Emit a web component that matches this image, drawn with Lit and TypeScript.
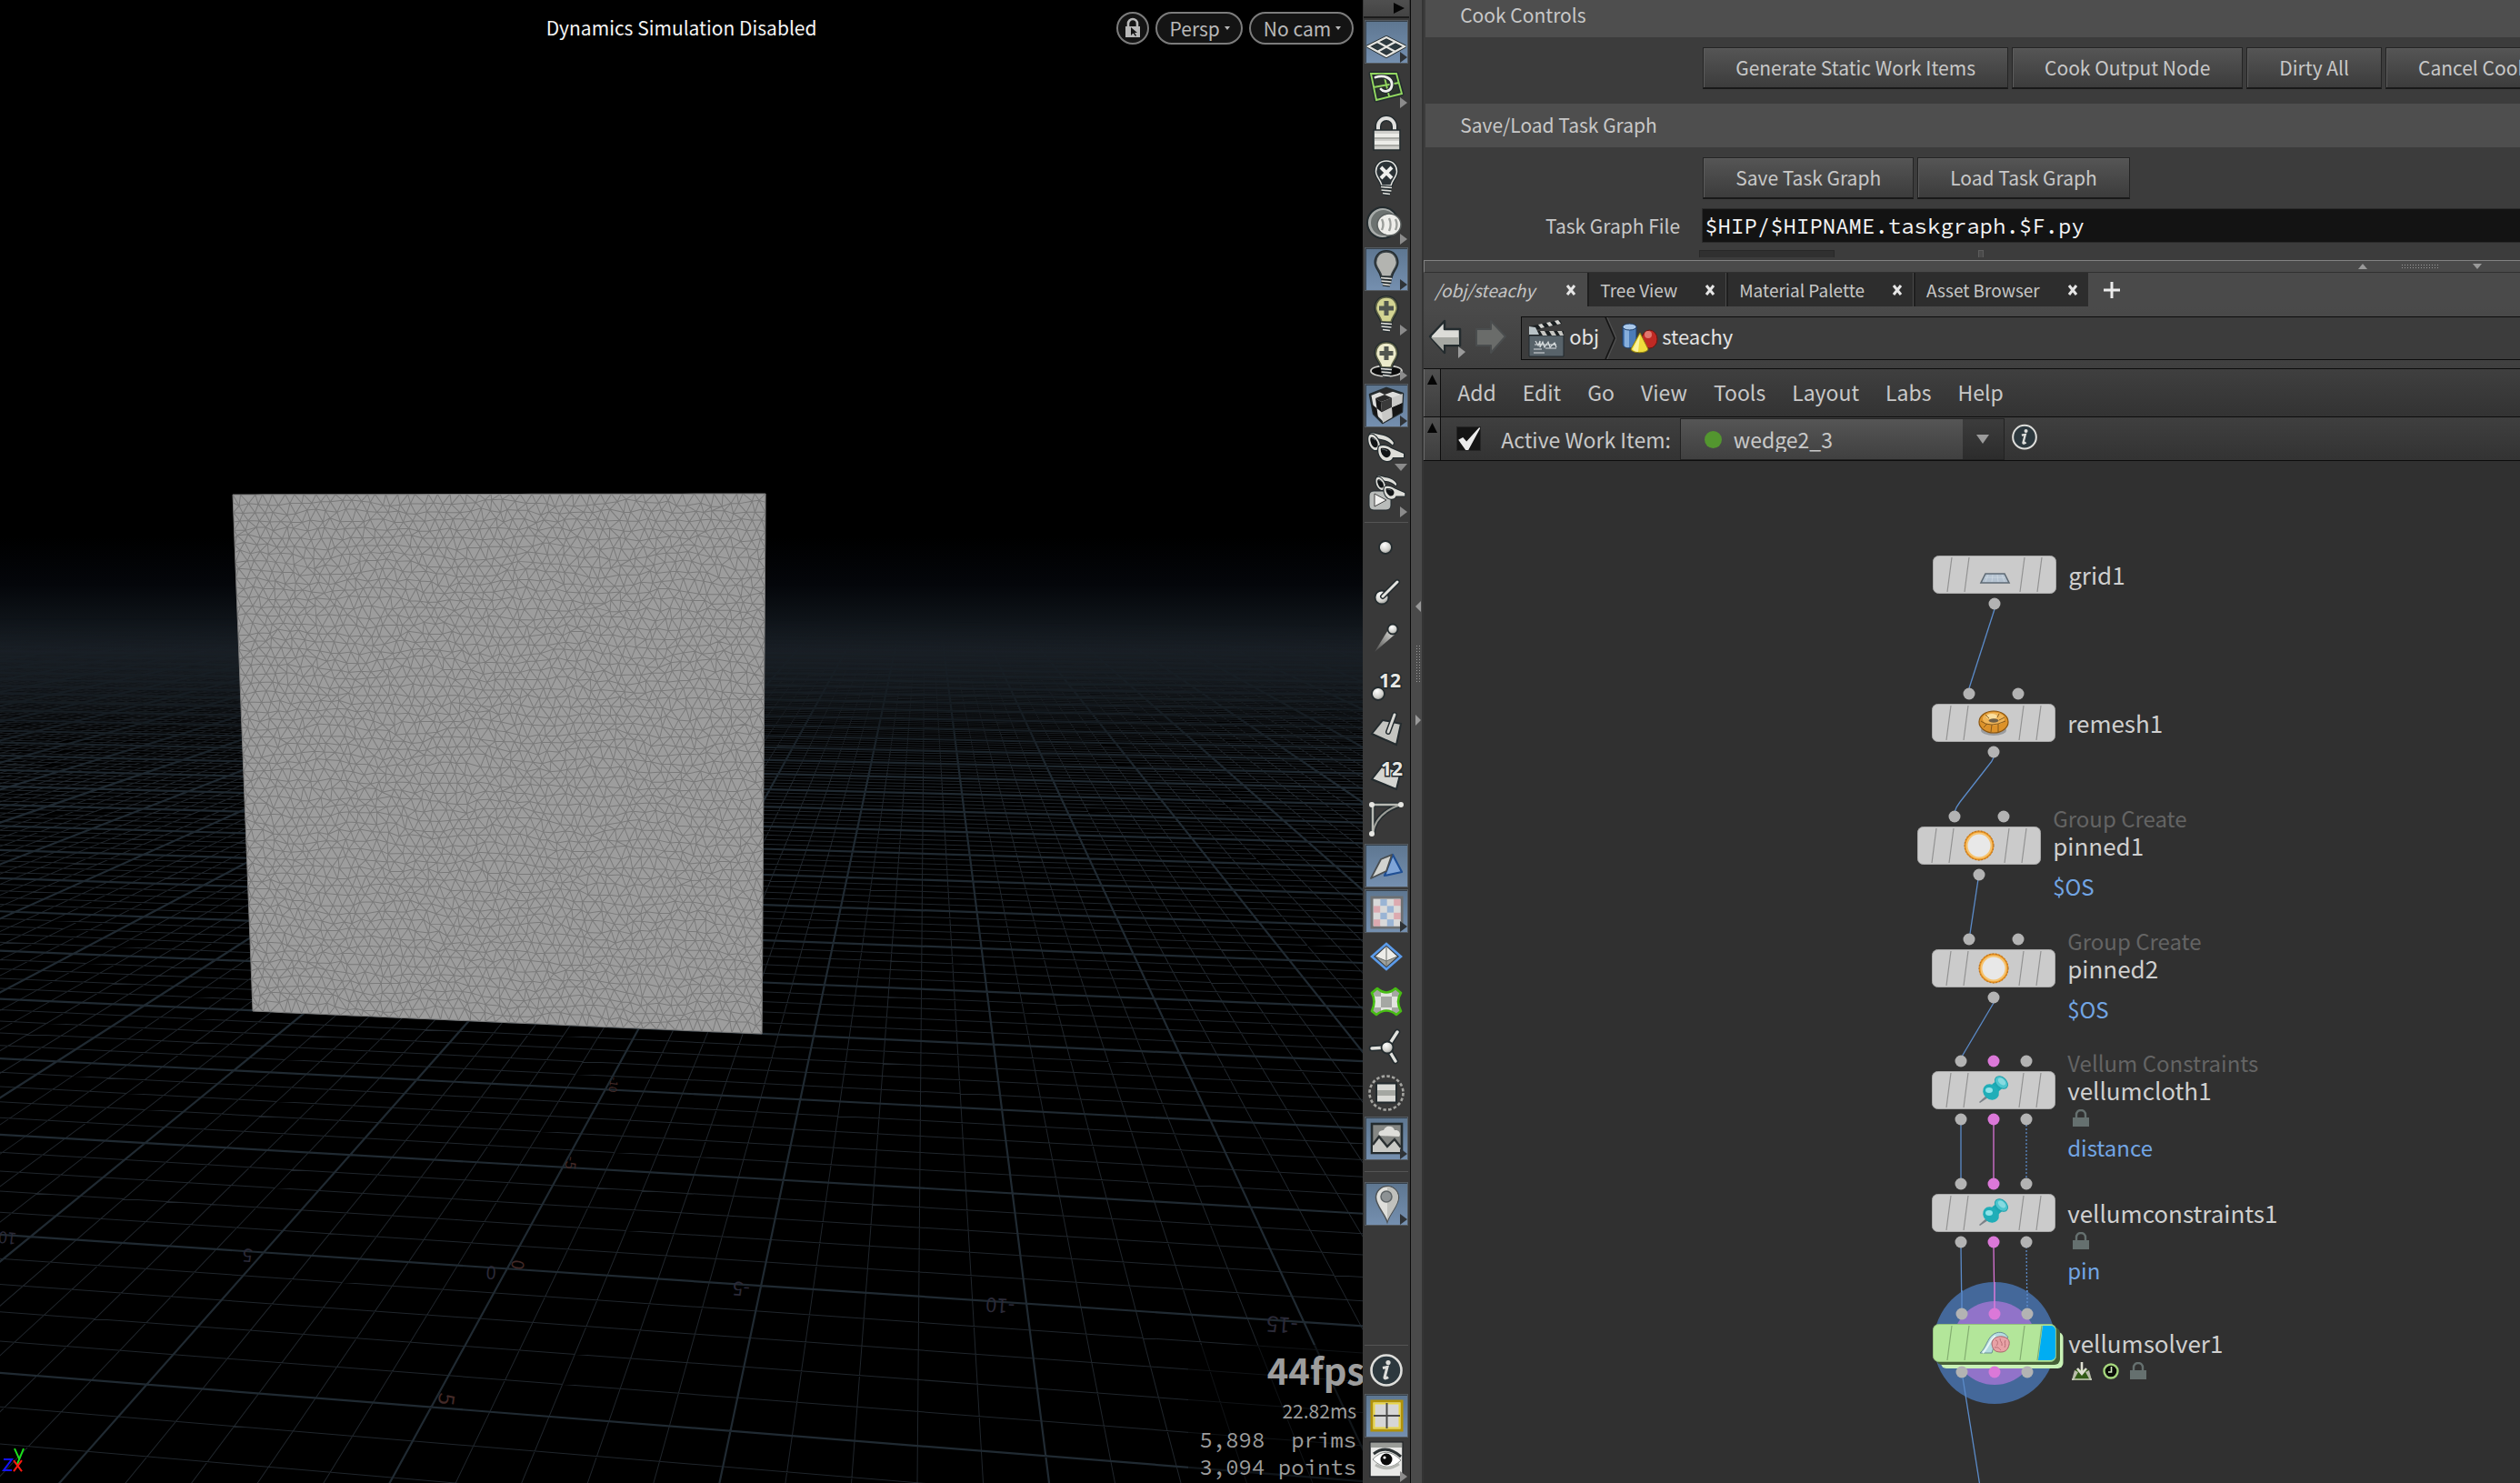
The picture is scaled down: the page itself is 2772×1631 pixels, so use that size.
import { LitElement, html, svg, css, nothing } from "lit";
import type { TemplateResult, SVGTemplateResult } from "lit";
import { customElement, property } from "lit/decorators.js";
import { classMap } from "lit/directives/class-map.js";
import { styleMap } from "lit/directives/style-map.js";

const base = css`
  *,
  *::before,
  *::after {
    box-sizing: border-box;
  }
  button,
  input,
  select {
    font: inherit;
    color: inherit;
    margin: 0;
  }
  svg {
    display: block;
  }
`;

/* ---------- 3D viewport ---------- */

type Pt = [number, number];

/* Ground plane (u, v) to screen. */
function project(u: number, v: number): Pt {
  const w = 0.00429 * u - 0.03069 * v + 1;
  return [(-52.28 * u - 31.24 * v + 557.7) / w, (2.32 * u - 17.06 * v + 1395.3) / w];
}

function gridPaths(): { minor: string; major: string } {
  let minor = "";
  let major = "";
  const add = (index: number, a: Pt, b: Pt) => {
    const seg = `M${a[0].toFixed(1)} ${a[1].toFixed(1)}L${b[0].toFixed(1)} ${b[1].toFixed(1)}`;
    if (index % 5 === 0) major += seg;
    else minor += seg;
  };
  for (let v = 12; v >= -180; v--) add(v, project(-80, v), project(125, v));
  for (let u = 120; u >= -75; u--) add(u, project(u, 12), project(u, -180));
  return { minor, major };
}

function clothPath(): string {
  const corners: Pt[] = [
    [256, 544],
    [842, 543],
    [838, 1137],
    [278, 1112],
  ];
  const cols = 52;
  const rows = 60;
  let seed = 7;
  const rnd = () => {
    seed = (seed * 16807) % 2147483647;
    return seed / 2147483647 - 0.5;
  };
  const at = (s: number, t: number): Pt => {
    const [a, b, c, d] = corners;
    return [0, 1].map(
      (k) => (1 - t) * ((1 - s) * a[k] + s * b[k]) + t * ((1 - s) * d[k] + s * c[k])
    ) as Pt;
  };
  const grid: Pt[][] = [];
  for (let r = 0; r <= rows; r++) {
    const row: Pt[] = [];
    const odd = r % 2 === 1;
    const n = odd ? cols + 2 : cols + 1;
    for (let i = 0; i < n; i++) {
      let s = odd ? Math.min(Math.max(i - 0.5, 0), cols) / cols : i / cols;
      let t = r / rows;
      const wave = 0.006 * Math.sin(s * 23 + t * 9) * Math.sin(t * 19 + 2);
      if (s > 0 && s < 1) s += (rnd() * 0.5) / cols;
      if (t > 0 && t < 1) t += (rnd() * 0.5) / rows + wave;
      row.push(at(s, t));
    }
    grid.push(row);
  }
  let d = "";
  const seg = (p: Pt, q: Pt) => {
    d += `M${p[0].toFixed(1)} ${p[1].toFixed(1)}L${q[0].toFixed(1)} ${q[1].toFixed(1)}`;
  };
  grid.forEach((row, r) => {
    for (let i = 1; i < row.length; i++) seg(row[i - 1], row[i]);
    for (const other of [grid[r - 1], grid[r + 1]]) {
      if (r % 2 === 1 || !other) continue;
      row.forEach((p, i) => {
        seg(p, other[i]);
        seg(p, other[i + 1]);
      });
    }
  });
  return d;
}

const GRID = gridPaths();
const CLOTH = clothPath();

interface AxisLabel {
  text: string;
  x: number;
  y: number;
  turn: number;
  size: number;
  kind: "u" | "v";
}

const AXIS_LABELS: AxisLabel[] = [
  { text: "10", x: 8, y: 1363, turn: 186, size: 18, kind: "u" },
  { text: "5", x: 272, y: 1382, turn: 184, size: 20, kind: "u" },
  { text: "0", x: 540, y: 1401, turn: 184, size: 20, kind: "u" },
  { text: "-5", x: 815, y: 1419, turn: 184, size: 21, kind: "u" },
  { text: "-10", x: 1100, y: 1438, turn: 184, size: 22, kind: "u" },
  { text: "-15", x: 1410, y: 1459, turn: 184, size: 24, kind: "u" },
  { text: "-10", x: 676, y: 1193, turn: 98, size: 12, kind: "v" },
  { text: "-5", x: 629, y: 1279, turn: 98, size: 16, kind: "v" },
  { text: "0", x: 571, y: 1391, turn: 98, size: 19, kind: "v" },
  { text: "5", x: 493, y: 1539, turn: 98, size: 24, kind: "v" },
];

@customElement("scene-view")
export class SceneView extends LitElement {
  static styles = [
    base,
    css`
      :host {
        display: grid;
        grid-template: minmax(0, 1fr) / minmax(0, 1fr);
        position: relative;
        overflow: hidden;
        background: #000;
      }
      .scene {
        width: 100%;
        height: 100%;
        grid-area: 1 / 1;
      }
      .overlay {
        grid-area: 1 / 1;
        position: relative;
        display: flex;
        flex-direction: column;
        justify-content: space-between;
      }
      .top {
        display: grid;
        grid-template-columns: 1fr auto 1fr;
        align-items: start;
        padding: 13px 10px 0;
      }
      .title {
        grid-column: 2;
        color: #f4f4f4;
        line-height: 34px;
        white-space: nowrap;
      }
      .pills {
        display: flex;
        justify-content: flex-end;
        gap: 7px;
      }
      .pill {
        display: flex;
        align-items: center;
        gap: 5px;
        height: 36px;
        padding: 0 12px 1px 14px;
        border: 2px solid #7c7c7c;
        border-radius: 18px;
        background: #141414;
        color: #b9b9b9;
        white-space: nowrap;
      }
      .pill.round {
        width: 36px;
        padding: 0;
        justify-content: center;
      }
      .stats {
        align-self: flex-end;
        text-align: right;
        color: #9d9d9d;
        padding: 0 7px 2px 12px;
        background: rgba(0, 0, 0, 0.5);
      }
      .fps {
        font-size: 40px;
        line-height: 54px;
        font-weight: 700;
        margin-right: -9px;
      }
      .ms {
        line-height: 36px;
      }
      .counts {
        font: 24px/30px "Source Code Pro", "Liberation Mono", monospace;
        white-space: pre;
      }
      .tag {
        font-family: "Noto Sans CJK SC", sans-serif;
        text-anchor: middle;
        dominant-baseline: central;
      }
      .u {
        fill: #2b2a38;
      }
      .v {
        fill: #432a28;
      }
    `,
  ];

  render() {
    return html`
      <svg class="scene" viewBox="0 0 1499 1631" preserveAspectRatio="xMidYMid slice" aria-hidden="true">
        <defs>
          <linearGradient id="fog" x1="0" y1="0" x2="0" y2="1">
            <stop offset="0" stop-color="#000" />
            <stop offset="0.25" stop-color="#04060a" />
            <stop offset="0.45" stop-color="#0f1419" />
            <stop offset="0.6" stop-color="#161b21" />
            <stop offset="0.75" stop-color="#0f1317" />
            <stop offset="1" stop-color="#000" />
          </linearGradient>
          <linearGradient id="fade" gradientUnits="userSpaceOnUse" x1="0" y1="680" x2="0" y2="860">
            <stop offset="0" stop-color="#000" />
            <stop offset="0.35" stop-color="#777" />
            <stop offset="1" stop-color="#fff" />
          </linearGradient>
          <mask id="far" maskUnits="userSpaceOnUse" x="0" y="600" width="1499" height="1031">
            <rect y="600" width="1499" height="1031" fill="url(#fade)" />
          </mask>
        </defs>
        <rect y="590" width="1499" height="210" fill="url(#fog)" />
        <g mask="url(#far)" fill="none">
          <path d=${GRID.minor} stroke="#20262c" stroke-width="1" />
          <path d=${GRID.major} stroke="#202a32" stroke-width="2.2" />
        </g>
        ${AXIS_LABELS.map(
          (l) => svg`<text class="tag ${l.kind}" font-size=${l.size}
            transform="translate(${l.x} ${l.y}) rotate(${l.turn})">${l.text}</text>`
        )}
        <path d="M256 544L842 543L838 1137L278 1112Z" fill="#9d9d9d" />
        <path d=${CLOTH} stroke="#7a7a7a" stroke-width="1" fill="none" />
        <g fill="none" stroke-width="2">
          <path d="M16 1593l5 11M26 1593l-7 17" stroke="#1be01b" />
          <path d="M4 1605h9l-9 12h9" stroke="#1414ff" />
          <path d="M15 1606l9 12M24 1606l-9 12" stroke="#ff1a10" />
        </g>
      </svg>
      <div class="overlay">
        <div class="top">
          <div class="title">Dynamics Simulation Disabled</div>
          <div class="pills">
            <button class="pill round" aria-label="Lock camera">
              <svg width="18" height="24" viewBox="0 0 18 24">
                <path d="M4 11V7a5 5 0 0 1 10 0v4" fill="none" stroke="#b9b9b9" stroke-width="2.6" />
                <path d="M1 10h16v12H1z" fill="#b9b9b9" />
                <path d="M7 11v9l2.500-2.500L12 21l1-1-2-3h3z" fill="#141414" />
              </svg>
            </button>
            <button class="pill">Persp${this.caret()}</button>
            <button class="pill">No cam${this.caret()}</button>
          </div>
        </div>
        <div class="stats">
          <div class="fps">44fps</div>
          <div class="ms">22.82ms</div>
          <div class="counts">5,898  prims</div>
          <div class="counts">3,094 points</div>
        </div>
      </div>
    `;
  }

  private caret() {
    return html`<svg width="6" height="4" viewBox="0 0 6 4"><path d="M0 0h6L3 4z" fill="#b9b9b9" /></svg>`;
  }
}

/* ---------- display options rail ---------- */

interface Tool {
  id: string;
  label: string;
  icon: SVGTemplateResult;
  active?: boolean;
  menu?: "side" | "down";
}

const DARK = "#232b2e";

const bulb = (fill: string, ring: string) => svg`
  <path d="M24 5C16.500 5 12.500 10.500 12.500 16.500c0 6 5 9 6.500 15.500h10c1.500-6.500 6.500-9.500 6.500-15.500C35.500 10.500 31.500 5 24 5z"
    fill=${fill} stroke=${DARK} stroke-width="4" />
  <path d="M24 5C16.500 5 12.500 10.500 12.500 16.500c0 6 5 9 6.500 15.500h10c1.500-6.500 6.500-9.500 6.500-15.500C35.500 10.500 31.500 5 24 5z"
    fill=${fill} stroke=${ring} stroke-width="1.500" />
  <path d="M18 33.500l12 1M18.500 37l11 1M20 40.500l8 1" stroke=${DARK} stroke-width="4" />
  <path d="M18 33.500l12 1M18.500 37l11 1M20 40.500l8 1" stroke="#dcdcd8" stroke-width="1.600" />`;

const glasses = svg`
  <g fill="#deded9" stroke=${DARK} stroke-width="2.500" stroke-linejoin="round" paint-order="stroke">
    <path d="M6 5C8 3 12 5 16 6c8 1 13 4 16 9l-1 2.500C27 13 22 11 12 10z" />
    <path d="M5 7c3-3 7 0 10 5 2 4 3 7 0 10-4 3-8-1-10-6-1-4-1-7 0-9z" />
    <path d="M16 19c4-2 9-1 13 2l14 6v4H31c-1 4-6 5-10 3-5-3-7-10-5-15z" />
  </g>
  <path d="M7 9c2-1 5 1 7 5 1 3 1 5-1 6-3 1-5-2-6-5s-1-5 0-6z" fill="#111416" />
  <path d="M18 21c3-1 8 0 10 3 2 4-1 8-5 7-4-2-6-7-5-10z" fill="#111416" />
  <path d="M8 10c2 0 3 1 4 2M19 22c2 0 4 0 6 2" fill="none" stroke="#5b6265" stroke-width="1.200" />`;

const ball = (x: number, y: number, r: number) =>
  svg`<circle cx=${x} cy=${y} r=${r} fill="url(#ball)" stroke=${DARK} stroke-width="1.800" />`;

const cube = svg`
  <path d="M6 12L24 5l18 6-1 20-21 12L10 33z" fill="#dededc" stroke=${DARK} stroke-width="2.500" stroke-linejoin="round" />
  <path d="M15 8.500L24 5l9 3-11 4z" fill="#2a2a2a" />
  <path d="M12 16l10-4 8 3.500L18 20z" fill="#2a2a2a" />
  <path d="M12 16l6 4 1 11.500-5.500-4.500zM8 22.500l5.500 4.500L15 38l-5-5z" fill="#161616" />
  <path d="M18 20l12-4.500V26l-11 5.500z" fill="#3a3a3a" />
  <path d="M30 26l11.500-5L41 31l-10.500 6z" fill="#161616" />
  <path d="M30 15.500L42 11l-.500 10L30 26zM19 31.500L30 26l.500 11L20 43z" fill="#c9c9c7" />`;

const CHECK = ["#9ab4d4", "#d9d9d9", "#dcaab0", "#d9d9d9"];

const TOP_TOOLS: Tool[] = [
  {
    id: "plane",
    label: "Reference plane",
    active: true,
    menu: "side",
    icon: svg`<path d="M24 19L44 29 24 40 4 29z" fill="#2d3a40" stroke=${DARK} stroke-width="4" stroke-linejoin="round" />
      <path d="M24 19L44 29 24 40 4 29zM14 24l20 11M34 24L14 35" fill="none" stroke="#e6e6e2" stroke-width="2.200" />`,
  },
  {
    id: "construction",
    label: "Construction plane",
    menu: "side",
    icon: svg`<path d="M7 9h28l6 22-28 7z" fill="#2c352c" stroke=${DARK} stroke-width="5" stroke-linejoin="round" />
      <path d="M7 9h28l6 22-28 7zM21 9l6 25M10 24l28-5" fill="none" stroke="#93d860" stroke-width="1.900" />
      <path d="M12 13c10-3 19 1 18 9-1 7-9 8-12 4" fill="none" stroke=${DARK} stroke-width="5" />
      <path d="M12 13c10-3 19 1 18 9-1 7-9 8-12 4" fill="none" stroke="#f0f0ee" stroke-width="2.800" stroke-linecap="round" />`,
  },
  {
    id: "lock",
    label: "Lock",
    icon: svg`<path d="M15 24v-7a9 9 0 0 1 18 0v7" fill="none" stroke=${DARK} stroke-width="7" />
      <path d="M15 24v-7a9 9 0 0 1 18 0v7" fill="none" stroke="#e0e0de" stroke-width="4" />
      <path d="M10 21h29v22H10z" fill="#cfcfcb" stroke=${DARK} stroke-width="1.500" />
      <path d="M11 25h27v4H11zM11 33h27v4H11z" fill="#ecece8" /><path d="M11 29h27v2H11zM11 37h27v2H11z" fill="#a9aaa5" />`,
  },
  {
    id: "nolight",
    label: "No lighting",
    icon: svg`${bulb("#2b3236", "#e4e4e0")}<path d="M18 12l12 12M30 12L18 24" stroke="#f0f0ee" stroke-width="4" />`,
  },
  {
    id: "headlight",
    label: "Headlight",
    menu: "side",
    icon: svg`<circle cx="20" cy="23" r="17" fill="#a9adab" stroke=${DARK} stroke-width="2" />
      <circle cx="21" cy="23" r="14" fill="#6c7270" /><ellipse cx="27" cy="25" rx="13" ry="12" fill="#eeeeea" stroke="#5a5f5e" stroke-width="1.500" />
      <path d="M19 19c2 4 2 8 0 12M27 18c2 4 2 10 0 14M34 19c2 4 2 8 0 12" fill="none" stroke="#9b9e9a" stroke-width="2.400" />`,
  },
  { id: "normal", label: "Normal lighting", active: true, menu: "side", icon: bulb("#b3b4b0", "#3a4246") },
  {
    id: "addlight",
    label: "High quality lighting",
    menu: "side",
    icon: svg`${bulb("#d3d492", "#5e6146")}<path d="M24 9v16M16 17h16" stroke="#51564f" stroke-width="5" />`,
  },
  {
    id: "shadows",
    label: "High quality lighting and shadows",
    menu: "side",
    icon: svg`<ellipse cx="24" cy="36" rx="17" ry="6" fill="#0c0c0c" stroke="#cfcfcb" stroke-width="1.800" />
      ${bulb("#ecebcb", "#5e6146")}<path d="M24 9v15M16.500 16.500h15" stroke="#51564f" stroke-width="5" />`,
  },
  { id: "materials", label: "Materials", active: true, menu: "side", icon: cube },
  { id: "ghost", label: "Ghost other objects", menu: "down", icon: glasses },
  {
    id: "display",
    label: "Display options for other objects",
    menu: "side",
    icon: svg`<rect x="5" y="18" width="24" height="21" rx="5" fill="#b9bcba" stroke=${DARK} />
      <path d="M11 21l13 7-13 7z" fill="#f2f2f0" stroke="#444" />
      <g transform="translate(9 -2) scale(.82)">${glasses}</g>`,
  },
];

const MID_TOOLS: Tool[] = [
  { id: "points", label: "Display points", icon: ball(23, 24, 7) },
  {
    id: "normals",
    label: "Point normals",
    icon: svg`${ball(19, 29, 7.5)}<path d="M20 28L36 12" stroke=${DARK} stroke-width="6" stroke-linecap="round" />
      <path d="M20 28L36 12" stroke="#e4e4e0" stroke-width="3" stroke-linecap="round" />`,
  },
  {
    id: "trails",
    label: "Point trails",
    icon: svg`<path d="M11 39L27 13l6 7z" fill="url(#tail)" />${ball(31, 14, 5.5)}`,
  },
  {
    id: "pointnum",
    label: "Point numbers",
    icon: svg`${ball(15, 35, 7)}<text class="num" x="16" y="28">12</text>`,
  },
  {
    id: "primnormals",
    label: "Primitive normals",
    icon: svg`<path d="M8 29L20 14l20 4-5 23z" fill="#c4c5c1" stroke=${DARK} stroke-width="2" />
      <path d="M26 27l7-19" stroke=${DARK} stroke-width="6" stroke-linecap="round" />
      <path d="M26 27l7-19" stroke="#d8d8d4" stroke-width="3" stroke-linecap="round" />`,
  },
  {
    id: "primnum",
    label: "Primitive numbers",
    icon: svg`<path d="M8 29L19 15l21 5-5 20z" fill="#d4d5d1" stroke=${DARK} stroke-width="2" />
      <text class="num" x="18" y="25">12</text>`,
  },
  {
    id: "hulls",
    label: "Hulls",
    icon: svg`<path d="M9 39V7h31M9 39Q12 16 40 7" fill="none" stroke=${DARK} stroke-width="5" />
      <path d="M9 39Q12 16 40 7" fill="none" stroke="#9b9d97" stroke-width="2" />
      <path d="M9 39V7h31" fill="none" stroke="#b8bab4" stroke-width="2.500" />
      <g fill="#e6e6e2"><circle cx="8" cy="7" r="3" /><circle cx="40" cy="7" r="3" /><circle cx="8" cy="39" r="3" /></g>`,
  },
  {
    id: "backface",
    label: "Back faces",
    active: true,
    icon: svg`<path d="M31 12l10 19-19 4z" fill="#7fa5d8" stroke="#1f4f94" stroke-width="2.200" stroke-linejoin="round" />
      <path d="M30 12L18 17 7 38l17-8z" fill="#d2d3cf" stroke="#4a4f52" stroke-width="1.800" stroke-linejoin="round" />`,
  },
  {
    id: "texture",
    label: "UV texture",
    active: true,
    menu: "side",
    icon: svg`<rect x="8" y="9" width="33" height="33" fill="#d9d9d9" stroke="#6d7072" stroke-width="3" />
      ${[0, 1, 2, 3].flatMap((r) =>
        [0, 1, 2, 3].map((c) => {
          const k = (r + c) % 2 === 0 ? 1 : (c + 2 * r) % 4 < 2 ? 0 : 2;
          return svg`<rect x=${10 + c * 7.4} y=${11 + r * 7.4} width="7.400" height="7.400" fill=${CHECK[k]} />`;
        })
      )}`,
  },
  {
    id: "hullshade",
    label: "Subdivision",
    icon: svg`<path d="M24 10L40 24 24 38 8 24z" fill="#3a3d3f" stroke="#5b9bea" stroke-width="2.600" />
      <path d="M24 13l12 11-12 5-12-5z" fill="#ecece8" /><path d="M24 29l12-5-12 11-12-11z" fill="#9fa19c" />
      <path d="M24 13v22M12 24l12 5 12-5" fill="none" stroke="#6d706c" stroke-width="1" />`,
  },
  {
    id: "patch",
    label: "Group overlay",
    icon: svg`<path d="M8 14l6-5q10 9 20 0l6 5q-6 9 0 20l-5 4q-11-9-22 0l-5-4q5-11 0-20z" fill="#e2e3df" />
      <path d="M18 18h12v12H18zM9 14l5-5 4 3v6h-6zM30 12l4-3 6 5-3 4h-7zM11 30h7v4l-5 4-5-4zM30 30h7l3 4-5 4-5-4z" fill="#a5a7a3" />
      <path d="M8 14l6-5q10 9 20 0l6 5q-6 9 0 20l-5 4q-11-9-22 0l-5-4q5-11 0-20z" fill="none" stroke="#48bd14" stroke-width="2.600" stroke-linejoin="round" />`,
  },
  {
    id: "axes",
    label: "Origin gnomon",
    icon: svg`<path d="M25 24L8 25M25 24L36 7M25 24l9 15" stroke=${DARK} stroke-width="6.500" stroke-linecap="round" />
      <path d="M25 24L8 25M25 24L36 7M25 24l9 15" stroke="#e2e2de" stroke-width="3.400" stroke-linecap="round" />${ball(25, 24, 6.5)}`,
  },
  {
    id: "mask",
    label: "Isolate",
    icon: svg`<circle cx="24" cy="24" r="18.500" fill="none" stroke="#a4a4a0" stroke-width="2.600" stroke-dasharray="3.500 2.300" />
      <rect x="13" y="13.500" width="22" height="21" fill="#dadad6" stroke=${DARK} stroke-width="2" /><path d="M14 21h20v6H14z" fill="#a5a7a2" />`,
  },
  {
    id: "background",
    label: "Background image",
    active: true,
    menu: "side",
    icon: svg`<rect x="8" y="8" width="33" height="32" fill="#858784" stroke=${DARK} stroke-width="2.600" />
      <path d="M16 21c-2-5 3-6 5-6 2-6 11-5 12 0 6-1 7 5 5 7z" fill="#dededa" />
      <path d="M9 31l7-10 9 12 8-8 7 10v4H9z" fill="#c9cac6" /><path d="M9 31l7-9 9 11 8-8 7 9" fill="none" stroke="#2a3032" stroke-width="2.400" />`,
  },
];

const PIN: Tool = {
  id: "pin",
  label: "Visualizers",
  active: true,
  menu: "side",
  icon: svg`<path d="M25 44C22 34 12.500 26 12.500 17a12.500 12.500 0 0 1 25 0c0 9-9.500 17-12.500 27z" fill="#dfdfdb" stroke="#4e5356" stroke-width="1.500" />
    <path d="M25 43V5a12 12 0 0 1 12 12c0 9-9 17-12 26z" fill="#c0c1bd" />
    <circle cx="24" cy="16" r="6" fill="#8d9294" stroke="#5f6567" stroke-width="1.500" />`,
};

const infoIcon = svg`<circle cx="24" cy="24" r="16.500" fill="#2c383e" stroke="#dededb" stroke-width="2.600" />
  <circle cx="26" cy="15.500" r="2.600" fill="#dededb" />
  <path d="M20 21.500l5-1-3 11.500c0 1.500 2 1 4-.500" fill="none" stroke="#dededb" stroke-width="3" />`;

const BOTTOM_TOOLS: Tool[] = [
  { id: "info", label: "Information", icon: infoIcon },
  {
    id: "layout",
    label: "Viewport layout",
    active: true,
    icon: svg`<rect x="8" y="8" width="33" height="32" fill="#d6d6d6" stroke="#b19208" stroke-width="3" />
      <rect x="10.500" y="10.500" width="28" height="27" fill="none" stroke="#e8d548" stroke-width="2" />
      <path d="M24.500 10v28M10 24h29" stroke="#4a4a4a" stroke-width="2" />`,
  },
  {
    id: "options",
    label: "Display options",
    menu: "side",
    icon: svg`<rect x="6" y="3" width="36" height="38" fill="#e9e9e7" stroke="#26292b" stroke-width="1.500" /><path d="M7 4h34v5H7z" fill="#9a9c98" />
      <path d="M9 22q15-16 31 1-15 15-31-1z" fill="#fff" stroke="#8c908d" stroke-width="1" />
      <path d="M10 16q14-11 30 3" fill="none" stroke="#2c3234" stroke-width="3" />
      <circle cx="24" cy="22" r="6.500" fill="#0a0a0a" /><circle cx="22" cy="20" r="1.600" fill="#fff" />
      <path d="M12 28q13 8 26-1" fill="none" stroke="#b4b6b2" stroke-width="3" />`,
  },
];

@customElement("tool-rail")
export class ToolRail extends LitElement {
  static styles = [
    base,
    css`
      :host {
        display: flex;
        flex-direction: column;
        gap: 2px;
        padding: 0 1px;
        background: #393939;
        border-right: 1px solid #0a0a0a;
        overflow: hidden;
        align-items: center;
      }
      .defs {
        position: absolute;
      }
      .head {
        align-self: stretch;
        display: flex;
        justify-content: flex-end;
        align-items: center;
        height: 20px;
        padding: 0 5px 0 0;
        border: 0;
        border-bottom: 2px solid #1c1c1c;
        background: linear-gradient(#4f4f4f, #444);
      }
      .tool {
        width: 48px;
        height: 48px;
        flex: none;
        padding: 0;
        border: 0;
        background: none;
      }
      .tool svg {
        width: 48px;
        height: 48px;
      }
      .active {
        background: linear-gradient(#5d7690, #7590b0);
        box-shadow: inset 0 0 0 1px #555b61, inset 2px 2px 0 0 #35404b;
      }
      .rule {
        width: 48px;
        flex: none;
        height: 4px;
        display: flex;
        align-items: center;
      }
      .rule::before {
        content: "";
        flex: 1;
        height: 1px;
        background: #545454;
      }
      .rule.tall {
        height: 20px;
      }
      .end {
        margin-top: auto;
      }
      .num {
        font: 700 21px "Noto Sans", sans-serif;
        fill: #e8e8e4;
        stroke: #232b2e;
        stroke-width: 3;
        paint-order: stroke;
      }
    `,
  ];

  private tool(t: Tool) {
    const fill = t.active ? "#2f3337" : "#8b8b8b";
    return html`<button class=${classMap({ tool: true, active: !!t.active })} aria-label=${t.label}>
      <svg viewBox="0 0 48 48">
        ${t.icon}
        ${t.menu === "side" ? svg`<path d="M39 35l8 6-8 6z" fill=${fill} />` : nothing}
        ${t.menu === "down" ? svg`<path d="M33 38h14l-7 8z" fill=${fill} />` : nothing}
      </svg>
    </button>`;
  }

  render() {
    return html`
      <svg class="defs" width="0" height="0" aria-hidden="true">
        <defs>
          <radialGradient id="ball" cx="0.4" cy="0.3" r="0.8">
            <stop offset="0" stop-color="#fff" />
            <stop offset="0.6" stop-color="#cfcfcb" />
            <stop offset="1" stop-color="#7d7f7b" />
          </radialGradient>
          <linearGradient id="tail" x1="1" y1="0" x2="0" y2="1">
            <stop offset="0.2" stop-color="#c8c8c4" />
            <stop offset="1" stop-color="#c8c8c4" stop-opacity="0.1" />
          </linearGradient>
        </defs>
      </svg>
      <button class="head" aria-label="Expand">
        <svg width="12" height="12" viewBox="0 0 12 12"><path d="M0 0l12 6-12 6z" fill="#050505" /></svg>
      </button>
      ${TOP_TOOLS.map((t) => this.tool(t))}
      <div class="rule"></div>
      ${MID_TOOLS.map((t) => this.tool(t))}
      <div class="rule tall"></div>
      ${this.tool(PIN)}
      <div class="rule end"></div>
      ${BOTTOM_TOOLS.map((t) => this.tool(t))}
    `;
  }
}

/* ---------- parameter pane ---------- */

@customElement("param-pane")
export class ParamPane extends LitElement {
  static styles = [
    base,
    css`
      :host {
        display: block;
        padding-left: 2px;
        background: #3c3c3c;
        overflow: hidden;
      }
      .band {
        margin: 0;
        padding-left: 38px;
        height: 48px;
        font-size: inherit;
        font-weight: 400;
        line-height: 46px;
        background: #4e4e4e;
      }
      .band.cut {
        height: 41px;
        line-height: 32px;
      }
      .buttons {
        display: flex;
        gap: 4px;
        padding: 11px 0 16px 305px;
      }
      .buttons.tight {
        padding-bottom: 10px;
      }
      .btn {
        flex: none;
        height: 46px;
        padding: 0 35px 1px;
        border: 1px solid #242424;
        border-bottom: 2px solid #191919;
        background: linear-gradient(#555, #3c3c3c);
        box-shadow: inset 1px 1px 0 #5c5c5c;
        white-space: nowrap;
      }
      .field {
        display: grid;
        grid-template-columns: 280px minmax(0, 1fr);
        column-gap: 24px;
        align-items: center;
      }
      .field label {
        text-align: right;
      }
      .path {
        width: 100%;
        height: 38px;
        padding: 0 2px;
        border: 1px solid #2b2b2b;
        border-right: 0;
        border-radius: 0;
        background: #131313;
        color: #f4f4f4;
        font: 24px "Source Code Pro", "Liberation Mono", monospace;
      }
      .next {
        display: flex;
        gap: 158px;
        height: 19px;
        padding: 8px 0 3px 301px;
      }
      .slot {
        width: 149px;
        background: #303030;
        border: 1px solid #282828;
        border-bottom: 0;
      }
      .knob {
        width: 6px;
        background: #4a4a4a;
        border: 1px solid #5c5c5c;
        border-bottom: 0;
      }
    `,
  ];

  render() {
    return html`
      <h2 class="band cut">Cook Controls</h2>
      <div class="buttons">
        ${["Generate Static Work Items", "Cook Output Node", "Dirty All", "Cancel Cook"].map(
          (t) => html`<button class="btn">${t}</button>`
        )}
      </div>
      <h2 class="band">Save/Load Task Graph</h2>
      <div class="buttons tight">
        ${["Save Task Graph", "Load Task Graph"].map((t) => html`<button class="btn">${t}</button>`)}
      </div>
      <div class="field">
        <label for="graph-file">Task Graph File</label>
        <input class="path" id="graph-file" type="text" spellcheck="false" value="$HIP/$HIPNAME.taskgraph.$F.py" />
      </div>
      <div class="next"><span class="slot"></span><span class="knob"></span></div>
    `;
  }
}

/* ---------- network graph ---------- */

type IconName = "grid" | "donut" | "ring" | "tack" | "brain";

interface GraphNode {
  id: string;
  x: number;
  y: number;
  icon: IconName;
  type?: string;
  note?: string;
  locked?: boolean;
  solver?: boolean;
  ins: number;
}

/* Node positions on the network canvas, upper left corner. */
const NODES: GraphNode[] = [
  { id: "grid1", x: 560, y: 104, icon: "grid", ins: 0 },
  { id: "remesh1", x: 559, y: 267, icon: "donut", ins: 2 },
  { id: "pinned1", x: 543, y: 402, icon: "ring", type: "Group Create", note: "$OS", ins: 2 },
  { id: "pinned2", x: 559, y: 537, icon: "ring", type: "Group Create", note: "$OS", ins: 2 },
  { id: "vellumcloth1", x: 559, y: 671, icon: "tack", type: "Vellum Constraints", note: "distance", locked: true, ins: 3 },
  { id: "vellumconstraints1", x: 559, y: 806, icon: "tack", note: "pin", locked: true, ins: 3 },
  { id: "vellumsolver1", x: 560, y: 949, icon: "brain", solver: true, ins: 3 },
];

const ICONS: Record<IconName, SVGTemplateResult> = {
  grid: svg`<path d="M7 16h21l5 10H2z" fill="#b4c2d0" stroke="#5f6b75" stroke-width="1.600" />
    <path d="M10 17l-3 8M15 17l-1 8M20 17l1 8M25 17l3 8M6 20h23" stroke="#d3dde6" stroke-width=".6" />`,
  donut: svg`<ellipse cx="17" cy="25" rx="14" ry="6" fill="#84878c" opacity=".7" />
    <ellipse cx="17" cy="16" rx="16" ry="12" fill="#dc922a" stroke="#8a5510" stroke-width="1.200" />
    <ellipse cx="17" cy="12.500" rx="12" ry="7" fill="#efb65a" />
    <ellipse cx="15" cy="10" rx="6" ry="3" fill="#fadf9f" />
    <ellipse cx="17" cy="14.500" rx="5.500" ry="2.200" fill="#6f6048" />
    <path d="M3 15l5 3 7 1 7-1 8-3M8 8l4 4M23 7l-2 4M29 11l-6 3M6 22l4-4M14 27l1-8M22 27l0-9" fill="none" stroke="#7c5218" stroke-width=".9" />`,
  ring: svg`<circle cx="17" cy="17" r="14" fill="#e8e8e8" stroke="#f6c470" stroke-width="3" />
    <circle cx="17" cy="17" r="15.500" fill="none" stroke="#e8901c" stroke-width="1.800" />
    <circle cx="17" cy="17" r="16" fill="none" stroke="#9a6a3a" stroke-width="1" stroke-dasharray="1.500 2" />`,
  tack: svg`<path d="M11 21L1 30l1 1 12-8z" fill="#7c8288" />
    <path d="M17 9l5-3 7 7-5 4-3 3-7-8z" fill="#1aa9b4" />
    <ellipse cx="14" cy="19" rx="9.500" ry="8" transform="rotate(42 14 19)" fill="#20aeb8" />
    <ellipse cx="12" cy="17" rx="4" ry="3" fill="#8fe4ea" />
    <ellipse cx="25.500" cy="8.500" rx="8" ry="5.500" transform="rotate(42 25.500 8.500)" fill="#4cc6cf" stroke="#1fa0ab" />
    <ellipse cx="26" cy="7.500" rx="5" ry="3" transform="rotate(42 26 7.500)" fill="#86dae0" />`,
  brain: svg`<path d="M1 28C8 22 9 12 15 8c5-4 13-4 17 3l-6 2c-8 0-9 5-12 15z" fill="#b4dce0" stroke="#6b8f96" stroke-width="1" />
    <path d="M4 28C10 22 12 13 18 9" fill="none" stroke="#e6f6f6" stroke-width="2" />
    <path d="M14 18c0-6 6-9 12-8s8 5 7 9-3 8-9 8-9-2-10-9z" fill="#e8a2a6" stroke="#a8666c" stroke-width="1" />
    <path d="M18 14c3 0 3 4 1 6M23 12c0 4 3 4 2 8M29 14c-2 3 1 4-1 8M17 22c4-1 5 1 7 3" fill="none" stroke="#b86e76" stroke-width="1" />`,
};

const lock = html`<svg width="18" height="20" viewBox="0 0 18 20" aria-hidden="true">
  <path d="M4 10V6a5 5 0 0 1 10 0v4" fill="none" stroke="#65706f" stroke-width="2.400" />
  <path d="M0 9h18v10H0z" fill="#65706f" />
</svg>`;

@customElement("network-graph")
export class NetworkGraph extends LitElement {
  static styles = [
    base,
    css`
      :host {
        display: block;
        position: relative;
        overflow: hidden;
        background: #303030;
      }
      .wires {
        position: absolute;
        left: 0;
        top: 0;
        width: 100%;
        height: 100%;
      }
      .node {
        position: absolute;
        display: flex;
        align-items: center;
        gap: 13px;
        height: 42px;
      }
      .body {
        overflow: visible;
        flex: none;
      }
      .text {
        position: relative;
        white-space: nowrap;
      }
      .name {
        font-size: 26px;
        line-height: 32px;
        color: #cfcfcf;
      }
      .type,
      .below {
        position: absolute;
        left: 0;
      }
      .type {
        bottom: 32px;
        font-size: 24px;
        line-height: 28px;
        color: #646464;
      }
      .below {
        top: 32px;
        display: flex;
        flex-direction: column;
        font-size: 24px;
        line-height: 34px;
        color: #72a5e4;
      }
      .below.plain {
        top: 44px;
      }
      .flags {
        display: flex;
        align-items: center;
        gap: 12px;
        height: 30px;
        padding-left: 6px;
      }
      .flags.up {
        padding-left: 4px;
      }
    `,
  ];

  private ports(y: number, count: number) {
    const xs = count === 1 ? [68] : count === 2 ? [41, 95] : [32, 68, 104];
    return xs.map(
      (x, i) => svg`<circle cx=${x} cy=${y} r="6.500" fill=${count === 3 && i === 1 ? "#db78d8" : "#b3b3b3"} />`
    );
  }

  private node(n: GraphNode): TemplateResult {
    const face = n.solver ? "#b3e69a" : "#cbcbcb";
    const slash = n.solver ? "#83ad70" : "#929292";
    return html`<div class="node" style=${styleMap({ left: `${n.x}px`, top: `${n.y}px` })}>
      <svg class="body" width="136" height="42" viewBox="0 0 136 42" aria-hidden="true">
        ${n.solver
          ? svg`<circle cx="68" cy="21" r="67" fill="#44689a" /><circle cx="68" cy="21" r="46" fill="#9173c9" />
              <path d="M68 -46V-10" stroke="#db78d8" stroke-width="1.500" /><path d="M32 -37V-10" stroke="#5f92d6" stroke-width="1.200" />
              <path d="M104 -37V-10" stroke="#5f92d6" stroke-width="1.200" stroke-dasharray="2 2" />
              <rect x="9" y="9" width="134.500" height="40" rx="6" fill="#c9f2b6" />
              <rect x="4" y="4" width="136" height="41" rx="6" fill="#465f37" />`
          : nothing}
        <rect x="0.500" y="0.500" width="135" height="41" rx="6" fill=${face} stroke=${n.solver ? "#93c07c" : "#a9a9a9"} />
        ${n.solver ? svg`<path d="M121 2h9a5 5 0 0 1 5 5v28a5 5 0 0 1-5 5h-14z" fill="#00adf2" />` : nothing}
        <path d="M21 2l-5 38M40 2l-5 38M101 2l-5 38M120 2l-5 38" stroke=${slash} stroke-width="1.200" />
        <g transform="translate(51 4)">${ICONS[n.icon]}</g>
        ${n.ins ? this.ports(-11, n.ins) : nothing} ${this.ports(53, n.ins === 3 ? 3 : 1)}
      </svg>
      <div class="text">
        ${n.type ? html`<div class="type">${n.type}</div>` : nothing}
        <div class="name">${n.id}</div>
        ${n.locked
          ? html`<div class="below"><div class="flags">${lock}</div><div>${n.note}</div></div>`
          : n.note
            ? html`<div class="below plain">${n.note}</div>`
            : nothing}
        ${n.solver
          ? html`<div class="below">
              <div class="flags up">
                <svg width="22" height="20" viewBox="0 0 22 20" aria-hidden="true">
                  <path d="M4 8h14l4 12H0z" fill="#325c16" />
                  <path d="M3 9l-3 11h2l5-9zM19 9l3 11h-2l-5-9z" fill="#b9bdaa" />
                  <path d="M11 0v12M6 7l5 6 5-6" fill="none" stroke="#dfe0d2" stroke-width="2.600" />
                  <path d="M0 19h22" stroke="#c9cdbb" stroke-width="1.500" />
                </svg>
                <svg width="18" height="20" viewBox="0 0 18 20" aria-hidden="true">
                  <circle cx="9" cy="10" r="7.500" fill="#0a0c08" stroke="#a4d67c" stroke-width="2.400" />
                  <path d="M9.500 5v6H6" fill="none" stroke="#d6efc2" stroke-width="1.600" />
                </svg>
                ${lock}
              </div>
            </div>`
          : nothing}
      </div>
    </div>`;
  }

  render() {
    return html`
      <svg class="wires" aria-hidden="true">
        <g fill="none" stroke="#5b8bc9" stroke-width="1.300">
          <path d="M628 163L600 250" />
          <path d="M627 326Q625 331 622 334L590 375Q586 380 584 386" />
          <path d="M610 460L601 520" />
          <path d="M627 596L592 655" />
          <path d="M591 730V790M591 864L592 940" />
          <path d="M663 730V790M663 864L664 940" stroke-dasharray="2 2" />
          <path d="M627 730V790M627 864L628 940" stroke="#d873d6" />
        </g>
      </svg>
      ${NODES.map((n) => this.node(n))}
      <svg class="wires" aria-hidden="true">
        <path d="M593 1008L613 1134" fill="none" stroke="#5b8bc9" stroke-width="1.300" />
      </svg>
    `;
  }
}

/* ---------- network pane chrome ---------- */

@customElement("network-pane")
export class NetworkPane extends LitElement {
  static styles = [
    base,
    css`
      :host {
        display: flex;
        flex-direction: column;
        min-height: 0;
        background: #303030;
      }
      .tabs {
        display: flex;
        align-items: stretch;
        height: 38px;
        background: #4a4a4a;
        font-size: 19px;
      }
      .tab {
        display: flex;
        align-items: center;
        gap: 30px;
        padding: 0 11px 0 12px;
        margin: 0 1px 1px 0;
        background: #2d2d2d;
        border-left: 2px solid #1f1f1f;
        color: #c6c6c6;
        white-space: nowrap;
      }
      .tab.on {
        background: #4a4a4a;
        border-left: 0;
        font-style: italic;
        gap: 34px;
      }
      .name,
      .x {
        padding: 0;
        border: 0;
        background: none;
        font-style: inherit;
      }
      .plus {
        padding: 0 16px;
        border: 0;
        background: none;
      }
      .nav {
        display: flex;
        align-items: center;
        height: 67px;
        background: linear-gradient(#4a4a4a, #3f3f3f);
      }
      .arrow {
        width: 50px;
        padding: 0 0 0 4px;
        border: 0;
        background: none;
      }
      .crumbs {
        flex: 1;
        display: flex;
        align-items: center;
        height: 48px;
        margin-left: 7px;
        padding-left: 6px;
        border: 1px solid #0d0d0d;
        border-right: 0;
        background: #3c3c3c;
        color: #e4e4e4;
      }
      .crumb {
        display: flex;
        align-items: center;
        gap: 4px;
        color: inherit;
        text-decoration: none;
        font-size: 22px;
      }
      .crumb span {
        padding-bottom: 6px;
      }
      .sep {
        margin: 0 6px;
      }
      .bar {
        display: flex;
        align-items: stretch;
        background: linear-gradient(#3f3f3f, #333);
        border-top: 1px solid #0d0d0d;
        font-size: 23px;
      }
      .menus {
        height: 53px;
      }
      .work {
        height: 49px;
        border-bottom: 1px solid #0d0d0d;
      }
      .grip {
        width: 19px;
        padding: 6px 0 0;
        display: flex;
        justify-content: center;
        border: 0;
        border-right: 1px solid #0d0d0d;
        border-left: 1px solid #6a6a6a;
        background: linear-gradient(#505050, #3e3e3e);
      }
      .menu {
        display: flex;
        align-items: center;
        gap: 29px;
        padding: 0 0 3px 18px;
      }
      .menu button {
        padding: 0;
        border: 0;
        background: none;
      }
      .row {
        display: flex;
        align-items: center;
        padding-left: 17px;
      }
      .tick {
        appearance: none;
        width: 27px;
        height: 27px;
        background: #141414;
        border: 1px solid #262626;
      }
      .tick:checked::before {
        content: "";
        display: block;
        width: 25px;
        height: 25px;
        background: #ebebeb;
        clip-path: polygon(4% 55%, 24% 44%, 40% 62%, 96% 0, 100% 4%, 48% 100%, 36% 100%);
      }
      .row label {
        margin-left: 22px;
        white-space: nowrap;
      }
      .pick {
        position: relative;
        width: 357px;
        height: 46px;
        margin: 0 8px 0 10px;
      }
      .pick select {
        appearance: none;
        width: 100%;
        height: 100%;
        padding: 0 50px 0 58px;
        border: 1px solid #222;
        border-radius: 0;
        background: linear-gradient(#555, #404040);
      }
      .dot {
        position: absolute;
        left: 27px;
        top: 14px;
        width: 19px;
        height: 19px;
        border-radius: 50%;
        background: #53962f;
      }
      .drop {
        position: absolute;
        right: 1px;
        top: 1px;
        width: 45px;
        height: 44px;
        display: grid;
        place-items: center;
        background: linear-gradient(#3c3c3c, #2c2c2c);
        pointer-events: none;
      }
      .info {
        padding: 0;
        border: 0;
        background: none;
      }
      network-graph {
        flex: 1;
        min-height: 0;
      }
    `,
  ];

  private cross() {
    return html`<svg width="12" height="12" viewBox="0 0 12 12"><path d="M2 1l8 10M10 1L2 11" stroke="#e6e6e6" stroke-width="3" /></svg>`;
  }

  private tab(label: string, on = false) {
    return html`<div class=${classMap({ tab: true, on })}>
      <button class="name">${label}</button>
      <button class="x" aria-label="Close ${label}">${this.cross()}</button>
    </div>`;
  }

  private grip() {
    return html`<button class="grip" aria-label="Collapse">
      <svg width="11" height="11" viewBox="0 0 11 11"><path d="M5.500 0L11 11H0z" fill="#050505" /></svg>
    </button>`;
  }

  render() {
    return html`
      <div class="tabs">
        ${this.tab("/obj/steachy", true)} ${this.tab("Tree View")} ${this.tab("Material Palette")}
        ${this.tab("Asset Browser")}
        <button class="plus" aria-label="New tab">
          <svg width="18" height="18" viewBox="0 0 18 18"><path d="M9 0v18M0 9h18" stroke="#ececec" stroke-width="3" /></svg>
        </button>
      </div>
      <div class="nav">
        <button class="arrow" aria-label="Back">
          <svg width="46" height="46" viewBox="0 0 46 46">
            <path d="M3 21L19 4v9h17v18H19v8z" fill="#dcdcd8" stroke=${DARK} stroke-width="2.500" stroke-linejoin="round" />
            <path d="M4 22h31v8H18v7z" fill="#a6a8a3" />
            <path d="M34 32l8 6-8 7z" fill="#9b9b9b" />
          </svg>
        </button>
        <button class="arrow" aria-label="Forward">
          <svg width="46" height="46" viewBox="0 0 46 46">
            <path d="M36 21L20 4v9H4v18h16v8z" fill="#6a6c6a" stroke="#4a4d4e" stroke-width="2" stroke-linejoin="round" />
          </svg>
        </button>
        <nav class="crumbs" aria-label="Network path">
          <a class="crumb" href="#obj">
            <svg width="42" height="42" viewBox="0 0 42 42" aria-hidden="true">
              <path d="M2 18h38v23H2z" fill="#58636a" stroke="#20282c" />
              <path d="M2 13h38v5H2z" fill="#1b1f21" /><path d="M14 13h5l3 5h-5zM24 13h5l3 5h-5zM33 13h5l2 5h-4z" fill="#c6c6c2" />
              <path d="M2 8l34-7 2 4-34 8z" fill="#1b1f21" /><path d="M12 6l4-1 3 4-4 1zM21 4l4-1 3 4-4 1zM30 2l4-1 3 4-4 1z" fill="#d6d6d2" />
              <path d="M2 8l7 1 4 8H2z" fill="#b8c2c6" />
              <path d="M9 24l3 5 2-5v7l3-6 2 6 4-6 2 6 5-5 2 5M7 33h9M20 32h12M7 37h12M8 28h24" fill="none" stroke="#d9dedf" stroke-width="1.200" />
            </svg>
            <span>obj</span>
          </a>
          <svg class="sep" width="13" height="46" viewBox="0 0 13 46" aria-hidden="true">
            <path d="M1 0l10 23L1 46" fill="none" stroke="#141414" stroke-width="1.500" />
            <path d="M3 0l10 23L3 46" fill="none" stroke="#555" stroke-width="1" />
          </svg>
          <a class="crumb" href="#steachy">
            <svg width="40" height="34" viewBox="0 0 40 34" aria-hidden="true">
              <path d="M1 4v20c0 5 15 5 15 0V4z" fill="#4c7cb8" stroke="#1d3c66" />
              <path d="M3 6v20q3 2 5 1V6z" fill="#86aedb" />
              <ellipse cx="8.500" cy="4.500" rx="7.500" ry="3.500" fill="#a9c8ea" stroke="#1d3c66" />
              <ellipse cx="30.500" cy="18" rx="8.500" ry="10" fill="#bf2a24" stroke="#6c1410" /><circle cx="29" cy="13" r="4" fill="#e0766e" />
              <path d="M20 11l9 18c-1 5-18 5-19 0z" fill="#f0dc3c" stroke="#8e7d10" /><path d="M20 13l-8 16q2 3 6 3z" fill="#faf3a0" />
            </svg>
            <span>steachy</span>
          </a>
        </nav>
      </div>
      <div class="bar menus">
        ${this.grip()}
        <div class="menu">
          ${["Add", "Edit", "Go", "View", "Tools", "Layout", "Labs", "Help"].map(
            (m) => html`<button>${m}</button>`
          )}
        </div>
      </div>
      <div class="bar work">
        ${this.grip()}
        <div class="row">
          <input class="tick" type="checkbox" id="active" checked />
          <label for="active">Active Work Item:</label>
          <span class="pick">
            <select aria-label="Work item">
              <option>wedge2_3</option>
            </select>
            <span class="dot"></span>
            <span class="drop"
              ><svg width="14" height="10" viewBox="0 0 14 10"><path d="M0 0h14L7 10z" fill="#9b9b9b" /></svg
            ></span>
          </span>
          <button class="info" aria-label="Work item information">
            <svg width="28" height="34" viewBox="6 6 36 42">${infoIcon}</svg>
          </button>
        </div>
      </div>
      <network-graph></network-graph>
    `;
  }
}

/* ---------- splitters ---------- */

@customElement("pane-splitter")
export class PaneSplitter extends LitElement {
  @property({ reflect: true }) axis: "row" | "column" = "column";

  static styles = [
    base,
    css`
      :host {
        display: flex;
        align-items: center;
        background: #4a4a4a;
        overflow: hidden;
      }
      :host([axis="column"]) {
        flex-direction: column;
        justify-content: flex-start;
        padding: 661px 0 0 3px;
        border-right: 2px solid #343434;
        gap: 36px;
      }
      :host([axis="row"]) {
        justify-content: flex-end;
        height: 14px;
        padding-right: 42px;
        gap: 37px;
        border-top: 1px solid #828282;
        border-left: 1px solid #828282;
        border-bottom: 1px solid #303030;
      }
      .dots {
        background: radial-gradient(#9a9a9a 1px, transparent 1px) 0 0 / 3px 3px;
      }
      :host([axis="column"]) .dots {
        width: 6px;
        height: 41px;
      }
      :host([axis="row"]) .dots {
        width: 42px;
        height: 6px;
      }
    `,
  ];

  render() {
    return this.axis === "column"
      ? html`<svg width="6" height="12" viewBox="0 0 6 12"><path d="M6 0v12L0 6z" fill="#9a9a9a" /></svg>
          <span class="dots"></span>
          <svg width="6" height="12" viewBox="0 0 6 12"><path d="M0 0v12l6-6z" fill="#9a9a9a" /></svg>`
      : html`<svg width="10" height="6" viewBox="0 0 10 6"><path d="M0 6h10L5 0z" fill="#9a9a9a" /></svg>
          <span class="dots"></span>
          <svg width="10" height="6" viewBox="0 0 10 6"><path d="M0 0h10L5 6z" fill="#9a9a9a" /></svg>`;
  }
}

@customElement("app-root")
export class AppRoot extends LitElement {
  static styles = [
    base,
    css`
      :host {
        display: grid;
        grid-template-columns: minmax(0, 1fr) 53px 14px 43.5%;
        grid-template-rows: minmax(0, 1fr);
        height: 100vh;
        overflow: hidden;
        background: #303030;
        color: #c8c8c8;
        font: 21px/28px "Noto Sans CJK SC", "Noto Sans", sans-serif;
      }
      .side {
        display: flex;
        flex-direction: column;
        min-height: 0;
        min-width: 0;
      }
      network-pane {
        flex: 1;
      }
    `,
  ];

  render() {
    return html`
      <scene-view></scene-view>
      <tool-rail></tool-rail>
      <pane-splitter axis="column"></pane-splitter>
      <div class="side">
        <param-pane></param-pane>
        <pane-splitter axis="row"></pane-splitter>
        <network-pane></network-pane>
      </div>
    `;
  }
}
